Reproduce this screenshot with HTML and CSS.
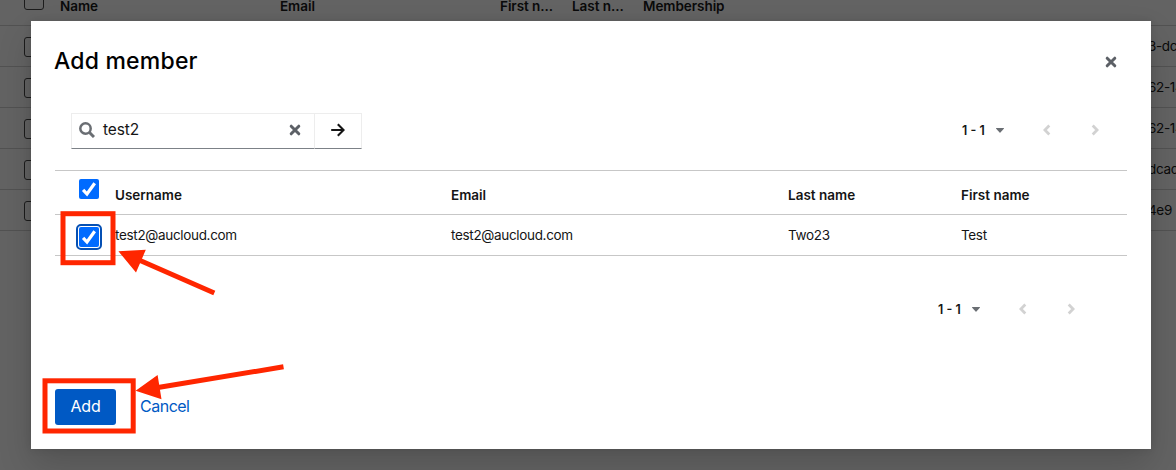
FILE: index.html
```html
<!DOCTYPE html>
<html lang="en">
<head>
<meta charset="utf-8">
<title>Add member</title>
<link rel="stylesheet" href="styles.css">
</head>
<body>
<main class="page">
  <div class="members members-head"><i class="box"></i><b class="m-name">Name</b><b class="m-email">Email</b><b class="m-first">First n...</b><b class="m-last">Last n...</b><b class="m-ship">Membership</b></div>
  <div class="members"><i class="box"></i><span class="member-id">3-dc</span></div>
  <div class="members"><i class="box"></i><span class="member-id">62-14</span></div>
  <div class="members"><i class="box"></i><span class="member-id">62-14</span></div>
  <div class="members"><i class="box"></i><span class="member-id">dcac</span></div>
  <div class="members"><i class="box"></i><span class="member-id">4e9</span></div>
</main>
<div class="backdrop"></div>
<section class="modal" role="dialog">
  <header class="modal-head">
    <h1 class="title"><span>Add member</span></h1>
    <svg class="close" width="12" height="12" viewBox="0 0 12 12"><path d="M2.2 2.2 9.8 9.8M9.8 2.2 2.2 9.8"/></svg>
  </header>
  <div class="toolbar">
    <div class="search">
      <svg class="lens" width="16" height="16" viewBox="0 0 16 16"><circle cx="6.5" cy="6.5" r="5.2"/><path class="handle" d="M10.5 10.5 15 15"/></svg>
      <span class="query">test2</span>
      <svg class="clear" width="12" height="12" viewBox="0 0 12 12"><path d="M2.2 2.2 9.8 9.8M9.8 2.2 2.2 9.8"/></svg>
    </div>
    <div class="go"><svg width="14" height="14" viewBox="0 0 14 14"><path d="M.2 7H12.5M6.8 1.2 12.6 7 6.8 12.8"/></svg></div>
    <div class="pager">
      <span class="range">1 - 1</span>
      <svg class="caret" width="8" height="5" viewBox="0 0 8 5"><path d="M.4 0H7.6Q8.3.2 7.8.8L4.4 4.6Q4 5 3.6 4.6L.2.8Q-.3.2.4 0Z"/></svg>
      <svg class="prev" width="8" height="12" viewBox="0 0 8 12"><path d="M6.3 1.6 1.9 6 6.3 10.4"/></svg>
      <svg class="next" width="8" height="12" viewBox="0 0 8 12"><path d="M1.7 1.6 6.1 6 1.7 10.4"/></svg>
    </div>
  </div>
  <div class="table">
    <div class="row row-head"><i class="check"><svg width="20" height="20" viewBox="0 0 20 20"><path d="M4.1 10.8 8 15 15.7 4.3"/></svg></i><b class="c-user">Username</b><b class="c-mail">Email</b><b class="c-last">Last name</b><b class="c-first">First name</b></div>
    <div class="row"><i class="check focused"><svg width="20" height="20" viewBox="0 0 20 20"><path d="M4.1 10.8 8 15 15.7 4.3"/></svg></i><span class="c-user">test2@aucloud.com</span><span class="c-mail">test2@aucloud.com</span><span class="c-last">Two23</span><span class="c-first">Test</span></div>
  </div>
  <div class="pager pager-bottom">
    <span class="range">1 - 1</span>
    <svg class="caret" width="8" height="5" viewBox="0 0 8 5"><path d="M.4 0H7.6Q8.3.2 7.8.8L4.4 4.6Q4 5 3.6 4.6L.2.8Q-.3.2.4 0Z"/></svg>
    <svg class="prev" width="8" height="12" viewBox="0 0 8 12"><path d="M6.3 1.6 1.9 6 6.3 10.4"/></svg>
    <svg class="next" width="8" height="12" viewBox="0 0 8 12"><path d="M1.7 1.6 6.1 6 1.7 10.4"/></svg>
  </div>
  <footer class="actions"><span class="add">Add</span><span class="cancel">Cancel</span></footer>
</section>
<svg class="marks" width="1176" height="470" viewBox="0 0 1176 470">
  <g class="mark-line"><rect x="63" y="213.7" width="50" height="49"/><rect x="45" y="380.8" width="88.2" height="50.2"/><path d="M139 260 214.3 293M158 387.5 283.5 366.8"/></g>
  <path class="mark-head" d="M118.4 251.2 145.8 249.8 136 272.5ZM135.6 390.8 157.6 375 161.5 399.2Z"/>
</svg>
</body>
</html>
```

FILE: styles.css
```css
* { box-sizing: border-box; }
body { margin: 0; height: 470px; overflow: hidden; background: #fff; color: #151515; font: 13.5px/20px Inter, "Noto Sans", sans-serif; }
svg { display: block; flex: none; fill: none; }
b { font-weight: 600; }

/* Page underneath the dialog */
.page { height: 470px; overflow: hidden; }
.members { display: grid; grid-template-columns: 60px 220px 220px 72px 71px 1fr; align-items: center; height: 41px; border-bottom: 1px solid #d2d2d2; white-space: nowrap; }
.members-head { height: 26px; align-items: start; line-height: 12px; letter-spacing: -.05px; }
.box { width: 20px; height: 20px; margin: 2px 0 0 24px; border: 1px solid #444; border-radius: 3px; }
.members-head .box { margin-top: -10px; }
.member-id { grid-column: 6; padding-left: 505px; font-size: 13.5px; letter-spacing: -.35px; }
.backdrop { position: absolute; inset: 0; background: rgba(3, 3, 3, .62); }

/* Dialog */
.modal { position: absolute; left: 31px; top: 21px; width: 1120px; height: 428px; padding: 24px; display: flex; flex-direction: column; background: #fff; box-shadow: 0 16px 32px rgba(3, 3, 3, .16), 0 0 8px rgba(3, 3, 3, .1); }
.modal-head { display: flex; justify-content: space-between; align-items: center; height: 32px; padding-right: 10px; }
.title { margin: 0 0 0 -1px; font-size: 23px; line-height: 32px; letter-spacing: .2px; font-weight: 500; color: #000; }
.close, .clear { stroke: #5c6066; stroke-width: 3; stroke-linecap: round; }
.close { margin-top: 2px; }
.toolbar { display: flex; height: 36px; margin: 36px 0 21px 16px; }
.search, .go { display: flex; align-items: center; border: 1px solid #ededed; border-bottom-color: #7c8187; }
.search { width: 244px; padding: 0 13px 2px 7px; }
.lens { stroke: #6a6e73; stroke-width: 2.5; }
.handle { stroke-width: 3; }
.query { flex: 1; margin-left: 8px; font-size: 15.5px; letter-spacing: -.1px; }
.go { width: 47px; padding-bottom: 2px; justify-content: center; border-left: 0; stroke: #151515; stroke-width: 2.1; }
.pager { display: flex; align-items: center; height: 36px; margin-left: auto; margin-right: 28px; padding-bottom: 2px; }
.range { width: 24px; margin-right: 10px; font-weight: 600; font-size: 12.5px; line-height: 18px; padding-top: 2px; white-space: nowrap; }
.caret { fill: #6a6e73; }
.prev, .next { stroke: #d2d2d2; stroke-width: 2.8; }
.prev { margin-left: 39px; }
.next { margin-left: 40px; }
.pager-bottom { margin-top: 36px; margin-right: 52px; }

/* Results */
.table { border-top: 1px solid #c7c7c7; letter-spacing: -.05px; }
.row { display: grid; grid-template-columns: 60px 336px 337px 173px 1fr; align-items: center; height: 41px; border-bottom: 1px solid #c7c7c7; }
.row span { letter-spacing: -.33px; }
.row-head { height: 44px; padding-top: 5px; letter-spacing: 0; }
.check { width: 20px; height: 20px; margin-left: 24px; border-radius: 2px; background: #006bff; stroke: #fff; stroke-width: 3.2; }
.row-head .check { margin-top: -13px; }
.focused { margin-top: 4px; outline: 2px solid #0550b4; outline-offset: 1px; }

.actions { display: flex; align-items: center; height: 36px; margin-top: auto; font-size: 16px; color: #0059c4; }
.add { width: 61px; height: 36px; margin-right: 24px; border-radius: 3px; background: #0059c4; color: #fff; text-align: center; line-height: 34px; letter-spacing: -.2px; }
.cancel { padding-bottom: 2px; letter-spacing: -.5px; }

/* Callouts */
.marks { position: absolute; left: 0; top: 0; }
.mark-line { stroke: #ff2600; stroke-width: 5; }
.mark-head { fill: #ff2600; }
```
